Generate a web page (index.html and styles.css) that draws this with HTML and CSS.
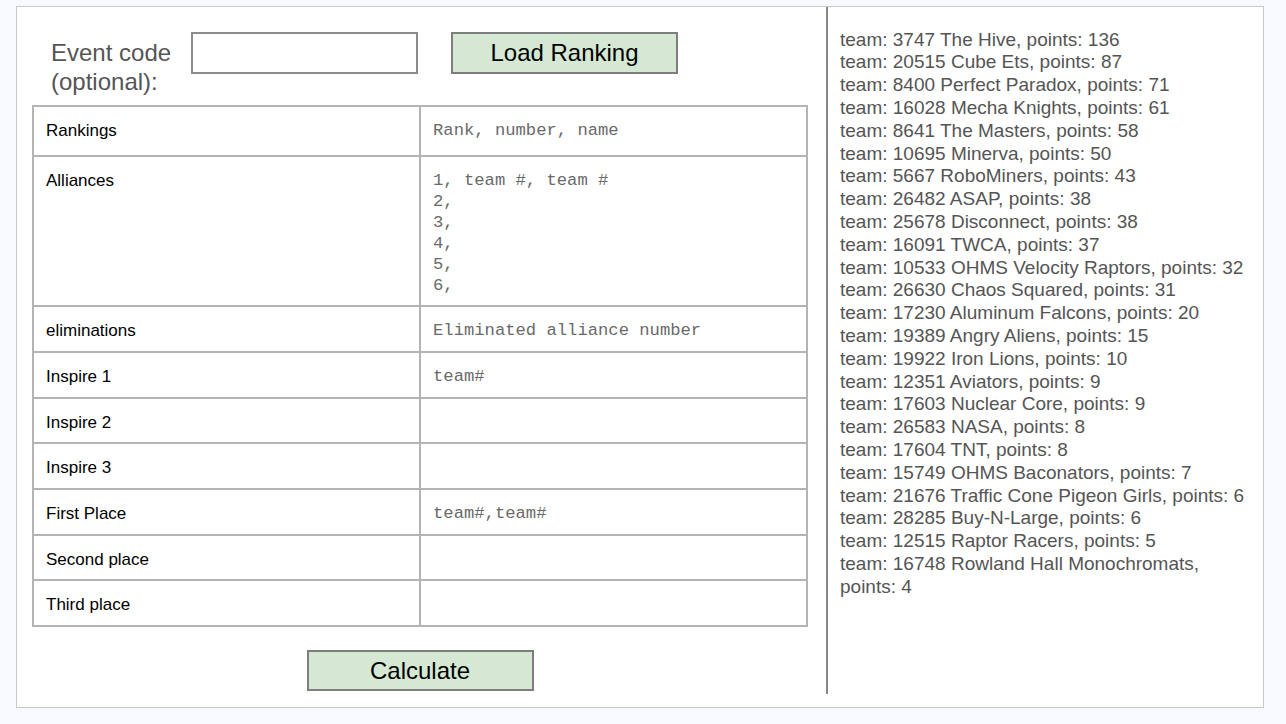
FILE: index.html
```html
<!DOCTYPE html>
<html>
<head>
<meta charset="utf-8">
<link rel="stylesheet" href="styles.css">
</head>
<body>
<div class="card">
  <div class="left">
    <div class="header">
      <div class="label">Event code<br>(optional):</div>
      <input class="code" type="text">
      <button class="btn load">Load Ranking</button>
    </div>
    <table class="grid">
      <tr class="r50"><td class="name">Rankings</td><td class="val">Rank, number, name</td></tr>
      <tr class="r150"><td class="name">Alliances</td><td class="val">1, team #, team #<br>2,<br>3,<br>4,<br>5,<br>6,</td></tr>
      <tr class="r46"><td class="name">eliminations</td><td class="val">Eliminated alliance number</td></tr>
      <tr class="r46"><td class="name">Inspire 1</td><td class="val">team#</td></tr>
      <tr class="r45"><td class="name">Inspire 2</td><td class="val"></td></tr>
      <tr class="r46"><td class="name">Inspire 3</td><td class="val"></td></tr>
      <tr class="r46"><td class="name">First Place</td><td class="val">team#,team#</td></tr>
      <tr class="r45"><td class="name">Second place</td><td class="val"></td></tr>
      <tr class="r46"><td class="name">Third place</td><td class="val"></td></tr>
    </table>
    <div class="calc-row"><button class="btn calc">Calculate</button></div>
  </div>
  <div class="right">
    <div>team: 3747 The Hive, points: 136</div>
    <div>team: 20515 Cube Ets, points: 87</div>
    <div>team: 8400 Perfect Paradox, points: 71</div>
    <div>team: 16028 Mecha Knights, points: 61</div>
    <div>team: 8641 The Masters, points: 58</div>
    <div>team: 10695 Minerva, points: 50</div>
    <div>team: 5667 RoboMiners, points: 43</div>
    <div>team: 26482 ASAP, points: 38</div>
    <div>team: 25678 Disconnect, points: 38</div>
    <div>team: 16091 TWCA, points: 37</div>
    <div>team: 10533 OHMS Velocity Raptors, points: 32</div>
    <div>team: 26630 Chaos Squared, points: 31</div>
    <div>team: 17230 Aluminum Falcons, points: 20</div>
    <div>team: 19389 Angry Aliens, points: 15</div>
    <div>team: 19922 Iron Lions, points: 10</div>
    <div>team: 12351 Aviators, points: 9</div>
    <div>team: 17603 Nuclear Core, points: 9</div>
    <div>team: 26583 NASA, points: 8</div>
    <div>team: 17604 TNT, points: 8</div>
    <div>team: 15749 OHMS Baconators, points: 7</div>
    <div>team: 21676 Traffic Cone Pigeon Girls, points: 6</div>
    <div>team: 28285 Buy-N-Large, points: 6</div>
    <div>team: 12515 Raptor Racers, points: 5</div>
    <div>team: 16748 Rowland Hall Monochromats, points: 4</div>
  </div>
</div>
</body>
</html>
```

FILE: styles.css
```css
html, body {
  margin: 0;
  padding: 0;
  background: #f8f9fe;
  font-family: "Liberation Sans", Arial, sans-serif;
}
.card {
  margin: 6px 0 0 16px;
  width: 1246px;
  height: 700px;
  background: #fff;
  border: 1px solid #c6cacd;
  display: flex;
  align-items: flex-start;
}
.left {
  width: 809px;
  padding: 25px 0 0 15px;
  box-sizing: border-box;
}
.header {
  display: flex;
  align-items: flex-start;
  padding-left: 19px;
  height: 73px;
}
.label {
  width: 140px;
  font-size: 24px;
  line-height: 29px;
  color: #555;
  margin-top: 6px;
}
.code {
  width: 227px;
  height: 42px;
  box-sizing: border-box;
  border: 2px solid #8c8c8c;
  margin: 0;
  padding: 0 6px;
  font-size: 18px;
  outline: none;
}
.btn {
  background: #d5e8d4;
  border: 2px solid #7e7e7e;
  box-sizing: border-box;
  font-family: "Liberation Sans", Arial, sans-serif;
  font-size: 24px;
  color: #000;
  margin: 0;
  padding: 0;
}
.load {
  margin-left: 33px;
  width: 227px;
  height: 42px;
}
.grid {
  border-collapse: collapse;
  width: 776px;
  table-layout: fixed;
  border: 2px solid #b4b4b4;
}
.grid td {
  border: 2px solid #b4b4b4;
  vertical-align: top;
  padding: 13px 12px 0 12px;
  line-height: 21px;
  box-sizing: border-box;
}
.r50 { height: 50px; }
.r150 { height: 150px; }
.r46 { height: 46px; }
.r45 { height: 45px; }
.name {
  font-size: 17px;
  color: #000;
}
.val {
  font-family: "Liberation Mono", "Courier New", monospace;
  font-size: 17.2px;
  color: #6a6a6a;
}
.calc-row {
  width: 776px;
  display: flex;
  justify-content: center;
  margin-top: 23px;
}
.calc {
  width: 227px;
  height: 41px;
}
.right {
  height: 687px;
  flex: 1;
  border-left: 2px solid #888;
  padding: 21.6px 12px 0 12px;
  box-sizing: border-box;
  font-size: 19px;
  line-height: 22.8px;
  color: #555;
}
```
